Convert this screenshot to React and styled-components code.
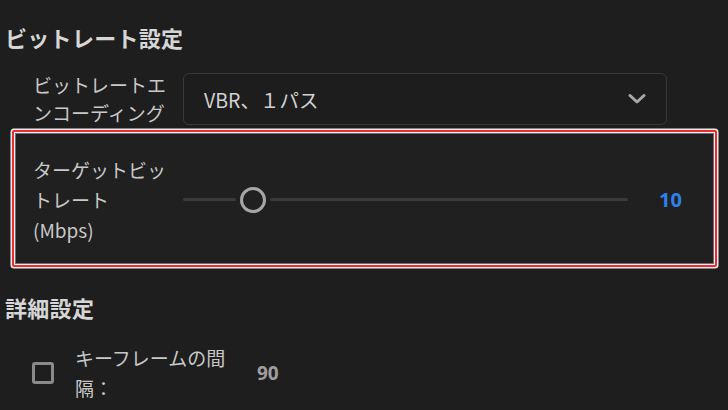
import React, { useState } from "react";
import styled, { createGlobalStyle } from "styled-components";

const GlobalStyle = createGlobalStyle`
	html, body {
		margin: 0;
		padding: 0;
		background: #1e1e1e;
	}
	body {
		font-family: "Noto Sans CJK JP", "Noto Sans", sans-serif;
		color: #c8c8c8;
		overflow: hidden;
	}
`;

const Page = styled.div`
	box-sizing: border-box;
	width: 728px;
	height: 410px;
	padding: 22px 10px 0 5px;
	display: flex;
	flex-direction: column;
`;

const Heading = styled.h2`
	margin: ${(p) => p.$top || 0}px 0 0 0;
	font-size: 22px;
	line-height: 30px;
	font-weight: 700;
	color: #d6d6d6;
	letter-spacing: 0.3px;
`;

const Row = styled.div`
	display: flex;
	align-items: center;
	padding-left: ${(p) => p.$indent || 28}px;
	margin-top: ${(p) => p.$top || 0}px;
`;

const Label = styled.div`
	width: ${(p) => p.$width || 150}px;
	flex-shrink: 0;
	font-size: 19px;
	line-height: ${(p) => p.$lh || 28}px;
	color: #c8c8c8;
	word-break: break-all;

	& .line {
		display: block;
	}
`;

const Select = styled.div`
	box-sizing: border-box;
	width: 484px;
	height: 52px;
	border: 1.5px solid #393939;
	border-radius: 6px;
	background: #1d1d1d;
	display: flex;
	align-items: center;
	justify-content: space-between;
	padding: 0 20px 0 20px;
	font-size: 19.5px;
	color: #d2d2d2;
	cursor: pointer;
`;

const Highlight = styled.div`
	box-sizing: border-box;
	margin: 3px 0 0 7px;
	width: 705px;
	height: 137px;
	border: 2px solid #ee2b31;
	border-radius: 2px;
	box-shadow: 0 0 0 1.5px #ececec, inset 0 0 0 1px #f2f2f2, inset 0 0 0 2px #6e6e6e;
	background: #202020;
	display: flex;
	align-items: center;
	padding: 2px 0 0 19px;
`;

const SliderWrap = styled.div`
	display: flex;
	align-items: center;
	flex: 1;
	padding-right: 37px;
`;

const Track = styled.div`
	position: relative;
	width: 445px;
	height: 26px;
	display: flex;
	align-items: center;
`;

const TrackPart = styled.div`
	height: 3px;
	border-radius: 2px;
	background: #3b3b3b;
	flex: ${(p) => (p.$grow ? 1 : "none")};
`;

const Thumb = styled.div`
	box-sizing: border-box;
	width: 26px;
	height: 26px;
	border-radius: 50%;
	border: 3px solid #a6a6a6;
	background: #202020;
	margin: 0 4px;
	flex-shrink: 0;
`;

const Value = styled.div`
	margin-left: 31px;
	font-size: 20px;
	font-weight: 700;
	color: #2f80e6;
	font-family: "Noto Sans", "Noto Sans CJK JP", sans-serif;
`;

const Check = styled.div`
	box-sizing: border-box;
	width: 22px;
	height: 22px;
	border: 3px solid #8a8a8a;
	border-radius: 3px;
	flex-shrink: 0;
	margin-right: 21px;
	cursor: pointer;
	background: ${(p) => (p.$on ? "#8a8a8a" : "transparent")};
`;

const Number = styled.div`
	font-size: 19px;
	font-weight: 700;
	color: #9e9e9e;
	font-family: "Noto Sans", "Noto Sans CJK JP", sans-serif;
	margin-left: 0;
`;

function Chevron() {
	return (
		<svg width="18" height="12" viewBox="0 0 18 12">
			<path d="M2 2.5 L9 9 L16 2.5" fill="none" stroke="#a8a8a8" strokeWidth="3" strokeLinecap="round" strokeLinejoin="round" />
		</svg>
	);
}

function App() {
	const [checked, setChecked] = useState(false);
	const value = 10;
	const pct = 0.16;

	return (
		<>
			<GlobalStyle />
			<Page>
				<Heading>ビットレート設定</Heading>
				<Row $top={19}>
					<Label>
						<span className="line">ビットレートエ</span>
						<span className="line">ンコーディング</span>
					</Label>
					<Select>
						<span>VBR、１パス</span>
						<Chevron />
					</Select>
				</Row>
				<Highlight>
					<Label $lh={30}>
						<span className="line">ターゲットビッ</span>
						<span className="line">トレート</span>
						<span className="line">(Mbps)</span>
					</Label>
					<SliderWrap>
						<Track>
							<TrackPart style={{ width: `${pct * 100 - 4}%` }} />
							<Thumb />
							<TrackPart $grow />
						</Track>
						<Value>{value}</Value>
					</SliderWrap>
				</Highlight>
				<Heading $top={25}>詳細設定</Heading>
				<Row $indent={27} $top={21}>
					<Check $on={checked} onClick={() => setChecked(!checked)} />
					<Label $width={182} $lh={30}>
						<span className="line">キーフレームの間</span>
						<span className="line">隔：</span>
					</Label>
					<Number>90</Number>
				</Row>
			</Page>
		</>
	);
}

export default App;
